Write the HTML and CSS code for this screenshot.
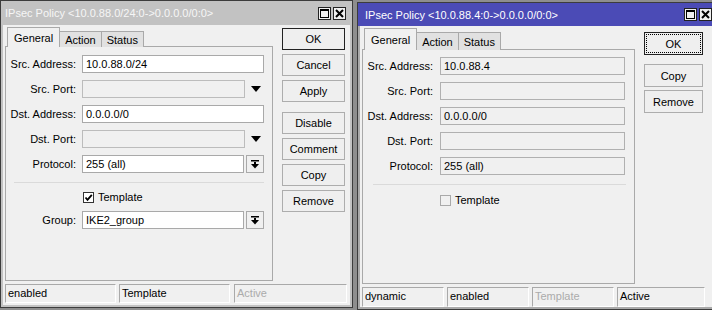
FILE: index.html
```
<!DOCTYPE html>
<html lang="en">
<head>
	<meta charset="UTF-8">
	<title>IPsec Policy</title>
	<link rel="stylesheet" href="styles.css">
</head>
<body>
	<!-- left window: editable policy, inactive -->
	<div class="window win-left">
		<div class="titlebar">
			<span class="title">IPsec Policy &lt;10.0.88.0/24:0-&gt;0.0.0.0/0:0&gt;</span>
			<span class="tbtn"><svg width="11" height="11" viewBox="0 0 11 11"><rect x="1.5" y="1.5" width="8" height="8" fill="none" stroke="#000"/><rect x="1" y="1" width="9" height="2" fill="#000"/></svg></span>
			<span class="tbtn"><svg width="11" height="11" viewBox="0 0 11 11"><path d="M2 2 L9 9 M9 2 L2 9" stroke="#000" stroke-width="2"/></svg></span>
		</div>
		<div class="client">
			<div class="main">
				<div class="tabbox">
					<div class="tabs">
						<span class="tab active">General</span>
						<span class="tab">Action</span>
						<span class="tab">Status</span>
					</div>
					<div class="panel">
						<div class="row">
							<span class="label">Src. Address:</span>
							<div class="field"><span class="input">10.0.88.0/24</span></div>
						</div>
						<div class="row">
							<span class="label">Src. Port:</span>
							<div class="field"><span class="input disabled"></span><span class="arrow"><svg width="10" height="6" viewBox="0 0 10 6"><path d="M0 0 H10 L5 6 Z" fill="#000"/></svg></span></div>
						</div>
						<div class="row">
							<span class="label">Dst. Address:</span>
							<div class="field"><span class="input">0.0.0.0/0</span></div>
						</div>
						<div class="row">
							<span class="label">Dst. Port:</span>
							<div class="field"><span class="input disabled"></span><span class="arrow"><svg width="10" height="6" viewBox="0 0 10 6"><path d="M0 0 H10 L5 6 Z" fill="#000"/></svg></span></div>
						</div>
						<div class="row">
							<span class="label">Protocol:</span>
							<div class="field"><span class="input">255 (all)</span><span class="ddbtn"><svg width="8" height="9" viewBox="0 0 8 9"><rect x="0" y="0" width="8" height="1.5" fill="#000"/><rect x="3" y="2" width="2" height="3" fill="#000"/><path d="M0 4 H8 L4 8.5 Z" fill="#000"/></svg></span></div>
						</div>
						<div class="separator"></div>
						<div class="row check-row">
							<span class="label"></span>
							<span class="checkbox checked"><svg width="9" height="9" viewBox="0 0 9 9"><path d="M1.5 4.5 L3.5 6.8 L7.8 1.8" fill="none" stroke="#000" stroke-width="1.8"/></svg></span>
							<span class="check-text">Template</span>
						</div>
						<div class="row group-row">
							<span class="label">Group:</span>
							<div class="field"><span class="input">IKE2_group</span><span class="ddbtn"><svg width="8" height="9" viewBox="0 0 8 9"><rect x="0" y="0" width="8" height="1.5" fill="#000"/><rect x="3" y="2" width="2" height="3" fill="#000"/><path d="M0 4 H8 L4 8.5 Z" fill="#000"/></svg></span></div>
						</div>
					</div>
				</div>
				<div class="buttons">
					<span class="btn default">OK</span>
					<span class="btn">Cancel</span>
					<span class="btn">Apply</span>
					<span class="btn spaced">Disable</span>
					<span class="btn">Comment</span>
					<span class="btn">Copy</span>
					<span class="btn">Remove</span>
				</div>
			</div>
			<div class="statusbar">
				<span class="cell">enabled</span>
				<span class="cell">Template</span>
				<span class="cell grey">Active</span>
			</div>
		</div>
	</div>

	<!-- right window: dynamic policy, read only, active -->
	<div class="window win-right">
		<div class="titlebar">
			<span class="title">IPsec Policy &lt;10.0.88.4:0-&gt;0.0.0.0/0:0&gt;</span>
			<span class="tbtn"><svg width="11" height="11" viewBox="0 0 11 11"><rect x="1.5" y="1.5" width="8" height="8" fill="none" stroke="#000"/><rect x="1" y="1" width="9" height="2" fill="#000"/></svg></span>
			<span class="tbtn"><svg width="11" height="11" viewBox="0 0 11 11"><path d="M2 2 L9 9 M9 2 L2 9" stroke="#000" stroke-width="2"/></svg></span>
		</div>
		<div class="client">
			<div class="main">
				<div class="tabbox">
					<div class="tabs">
						<span class="tab active">General</span>
						<span class="tab">Action</span>
						<span class="tab">Status</span>
					</div>
					<div class="panel">
						<div class="row">
							<span class="label">Src. Address:</span>
							<div class="field"><span class="input readonly">10.0.88.4</span></div>
						</div>
						<div class="row">
							<span class="label">Src. Port:</span>
							<div class="field"><span class="input readonly"></span></div>
						</div>
						<div class="row">
							<span class="label">Dst. Address:</span>
							<div class="field"><span class="input readonly">0.0.0.0/0</span></div>
						</div>
						<div class="row">
							<span class="label">Dst. Port:</span>
							<div class="field"><span class="input readonly"></span></div>
						</div>
						<div class="row">
							<span class="label">Protocol:</span>
							<div class="field"><span class="input readonly">255 (all)</span></div>
						</div>
						<div class="separator"></div>
						<div class="row check-row">
							<span class="label"></span>
							<span class="checkbox"></span>
							<span class="check-text">Template</span>
						</div>
					</div>
				</div>
				<div class="buttons">
					<span class="btn default focused">OK</span>
					<span class="btn spaced">Copy</span>
					<span class="btn">Remove</span>
				</div>
			</div>
			<div class="statusbar">
				<span class="cell">dynamic</span>
				<span class="cell">enabled</span>
				<span class="cell grey">Template</span>
				<span class="cell wide">Active</span>
			</div>
		</div>
	</div>
</body>
</html>
```

FILE: styles.css
```
*{margin:0;padding:0;box-sizing:border-box}
body{
	width:712px;
	height:310px;
	overflow:hidden;
	background:#8e8e8e;
	display:flex;
	align-items:flex-start;
	gap:4px;
	font-family:"Liberation Sans", Arial, sans-serif;
	font-size:11px;
	color:#000;
}
.window{
	border:1px solid #3c3c3c;
	display:flex;
	flex-direction:column;
	flex-shrink:0;
}
.win-left{
	width:353px;
	height:308px;
	background:#c2c2c2;
	padding:0 2px 2px;
}
.win-right{
	width:362px;
	height:308px;
	margin-top:2px;
	background:#a9a9a9;
	padding:0 2px 2px;
}
.titlebar{
	height:24px;
	display:flex;
	align-items:center;
	padding-left:4px;
	margin:0 -2px;
	padding-right:6px;
}
.win-left .titlebar{
	background:#c2c2c2;
	color:#f6f6f6;
}
.win-right .titlebar{
	height:23px;
	background:#4b4bb6;
	color:#fff;
	padding-left:7px;
}
.title{
	flex:1;
	white-space:nowrap;
}
.tbtn{
	width:13px;
	height:13px;
	border:1px solid #222;
	background:#f0f0f0;
	margin-left:2px;
	display:flex;
	align-items:center;
	justify-content:center;
}
.client{
	flex:1;
	background:#f0f0f0;
	padding:2px 2px 0 2px;
	display:flex;
	flex-direction:column;
}
.main{
	display:flex;
	flex:1;
}
.tabbox{
	display:flex;
	flex-direction:column;
}
.win-left .tabbox{width:268px}
.win-right .tabbox{width:273px}
.tabs{
	display:flex;
	align-items:flex-end;
	padding-left:2px;
	height:20px;
	margin-bottom:-1px;
	position:relative;
	z-index:1;
}
.tab{
	height:16px;
	padding:0 5px;
	border:1px solid #a9a9a9;
	border-bottom:none;
	background:#e1e1e1;
	display:flex;
	align-items:center;
	margin-left:-1px;
}
.tab.active{
	height:20px;
	background:#f0f0f0;
	padding:0 6px;
	margin-left:0;
}
.win-right .tabs{height:22px}
.win-right .tab{height:18px}
.win-right .tab.active{height:22px}
.panel{
	flex:1;
	border:1px solid #a9a9a9;
	padding:8px 8px 0 0;
}
.win-right .panel{padding:7px 9px 0 0}
.row{
	display:flex;
	align-items:center;
	height:18px;
	margin-top:7px;
}
.row:first-child{margin-top:0}
.label{
	width:70px;
	text-align:right;
	margin-right:6px;
	flex-shrink:0;
}
.win-right .label{margin-right:7px}
.field{
	flex:1;
	display:flex;
	height:18px;
}
.input{
	flex:1;
	height:18px;
	border:1px solid #a9a9a9;
	background:#fff;
	padding-left:3px;
	line-height:16px;
	white-space:nowrap;
}
.input.disabled{
	background:#f0f0f0;
	border-color:#bcbcbc;
}
.input.readonly{
	background:#f0f0f0;
	border-color:#b0b0b0;
}
.arrow{
	width:19px;
	display:flex;
	align-items:center;
	justify-content:center;
	padding-left:3px;
}
.ddbtn{
	width:18px;
	margin-left:2px;
	border:1px solid #a9a9a9;
	background:#f0f0f0;
	display:flex;
	align-items:center;
	justify-content:center;
}
.separator{
	height:1px;
	background:#dadada;
	margin:9px 0 0 8px;
}
.win-right .separator{margin:9px -1px 0 10px}
.check-row{margin-top:8px;height:12px}
.win-right .check-row{margin-top:9px}
.checkbox{
	width:11px;
	height:11px;
	border:1px solid #333;
	background:#fff;
	display:flex;
	align-items:center;
	justify-content:center;
	margin-left:1px;
}
.win-right .checkbox{
	border-color:#a9a9a9;
	background:#f0f0f0;
	margin-left:0;
}
.check-text{margin-left:4px}
.group-row{margin-top:8px}
.buttons{
	display:flex;
	flex-direction:column;
	gap:4px;
	padding-top:1px;
}
.win-left .buttons{margin-left:9px;width:63px}
.win-right .buttons{margin-left:9px;width:59px;padding-top:4px;gap:3px}
.btn{
	height:22px;
	border:1px solid #adadad;
	background:#efefef;
	display:flex;
	align-items:center;
	justify-content:center;
}
.win-right .btn{height:23px}
.btn.default{border-color:#222}
.btn.focused{
	outline:1px dotted #000;
	outline-offset:-3px;
}
.btn.spaced{margin-top:6px}
.win-right .btn.spaced{margin-top:6px}
.statusbar{
	display:flex;
	gap:3px;
	margin-top:3px;
	height:19px;
	margin-bottom:2px;
}
.win-right .statusbar{height:20px;margin-bottom:0}
.cell{
	border:1px solid;
	border-color:#a9a9a9 #fff #fff #a9a9a9;
	padding-left:2px;
	line-height:17px;
	white-space:nowrap;
}
.win-left .cell{width:111px}
.win-left .cell:last-child{width:113px;margin-left:1px}
.win-right .cell{width:82px}
.win-right .cell.wide{width:88px}
.cell.grey{color:#ababab}
```
